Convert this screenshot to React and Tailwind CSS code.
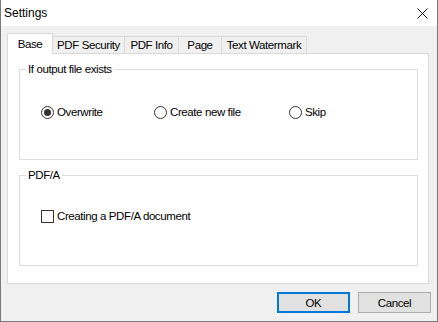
import React, { useState } from 'react';

const tabs = [
  { label: 'Base', w: 'w-[46px]' },
  { label: 'PDF Security', w: 'w-[73px]' },
  { label: 'PDF Info', w: 'w-[55px]' },
  { label: 'Page', w: 'w-[44px]' },
  { label: 'Text Watermark', w: 'w-[86px]' },
];

const Radio = ({ checked, label, onClick, width }) => (
  <button type="button" onClick={onClick} className={`flex items-center gap-[3px] ${width}`}>
    <svg width="13" height="13" viewBox="0 0 13 13" className="shrink-0">
      <circle cx="6.5" cy="6.5" r="6" fill="#fff" stroke="#333" strokeWidth="1" />
      {checked && <circle cx="6.5" cy="6.5" r="3.5" fill="#333" />}
    </svg>
    <span>{label}</span>
  </button>
);

const Group = ({ title, children, className }) => (
  <div className={`relative h-[91px] ml-[11px] mr-[10px] border border-[#dcdcdc] ${className}`}>
    <span className="absolute -top-[8px] left-[6px] bg-white px-[2px] leading-[14px]">{title}</span>
    {children}
  </div>
);

export default function App() {
  const [active, setActive] = useState(0);
  const [mode, setMode] = useState('overwrite');
  const [pdfa, setPdfa] = useState(false);

  return (
    <div
      className="w-[438px] h-[322px] flex flex-col border-x border-b border-[#7a7a7a] text-[11.5px] leading-[16px] tracking-[-0.4px] text-black select-none"
      style={{ fontFamily: '"Liberation Sans", Arial, sans-serif' }}
    >
      {/* Title bar */}
      <div className="h-[26px] shrink-0 bg-white flex items-center justify-between pl-[3px] pr-[9px]">
        <span className="text-[12px] tracking-normal">Settings</span>
        <svg width="11" height="11" viewBox="0 0 11 11">
          <path d="M0.5 0.5 L10.5 10.5 M10.5 0.5 L0.5 10.5" stroke="#111" strokeWidth="1" />
        </svg>
      </div>

      {/* Body */}
      <div className="flex-1 bg-[#f0f0f0] flex flex-col pt-[7px]">
        <div className="pl-[6px] pr-[8px]">
          <div className="flex items-end h-[20px]">
            {tabs.map((t, i) => (
              <button
                key={t.label}
                type="button"
                onClick={() => setActive(i)}
                className={`${t.w} ${i > 0 ? '-ml-px' : ''} border border-[#d9d9d9] flex items-center justify-center ${
                  active === i
                    ? 'h-[21px] -mb-px bg-white border-b-0 relative z-10 pb-[1px]'
                    : 'h-[17px] bg-[#f0f0f0] border-b-0'
                }`}
              >
                {t.label}
              </button>
            ))}
          </div>

          <div className="h-[231px] bg-white border border-[#d9d9d9] pt-[15px]">
            <Group title="If output file exists">
              <div className="flex items-center pl-[21px] pt-[34px]">
                <Radio width="w-[113px]" label="Overwrite" checked={mode === 'overwrite'} onClick={() => setMode('overwrite')} />
                <Radio width="w-[135px]" label="Create new file" checked={mode === 'new'} onClick={() => setMode('new')} />
                <Radio width="" label="Skip" checked={mode === 'skip'} onClick={() => setMode('skip')} />
              </div>
            </Group>

            <Group title="PDF/A" className="mt-[15px]">
              <button type="button" onClick={() => setPdfa(!pdfa)} className="flex items-center gap-[3px] ml-[21px] mt-[32px]">
                <span className="w-[13px] h-[13px] border border-[#333] bg-white flex items-center justify-center">
                  {pdfa && (
                    <svg width="9" height="9" viewBox="0 0 9 9">
                      <path d="M1 4.5 L3.5 7 L8 1.5" stroke="#333" strokeWidth="1.3" fill="none" />
                    </svg>
                  )}
                </span>
                <span>Creating a PDF/A document</span>
              </button>
            </Group>
          </div>
        </div>

        <div className="flex justify-end gap-[8px] pr-[6px] mt-[8px]">
          <button type="button" className="w-[73px] h-[21px] bg-[#e1e1e1] border-2 border-[#0078d7] flex items-center justify-center">
            OK
          </button>
          <button type="button" className="w-[73px] h-[21px] bg-[#e1e1e1] border border-[#adadad] flex items-center justify-center">
            Cancel
          </button>
        </div>
      </div>
    </div>
  );
}
